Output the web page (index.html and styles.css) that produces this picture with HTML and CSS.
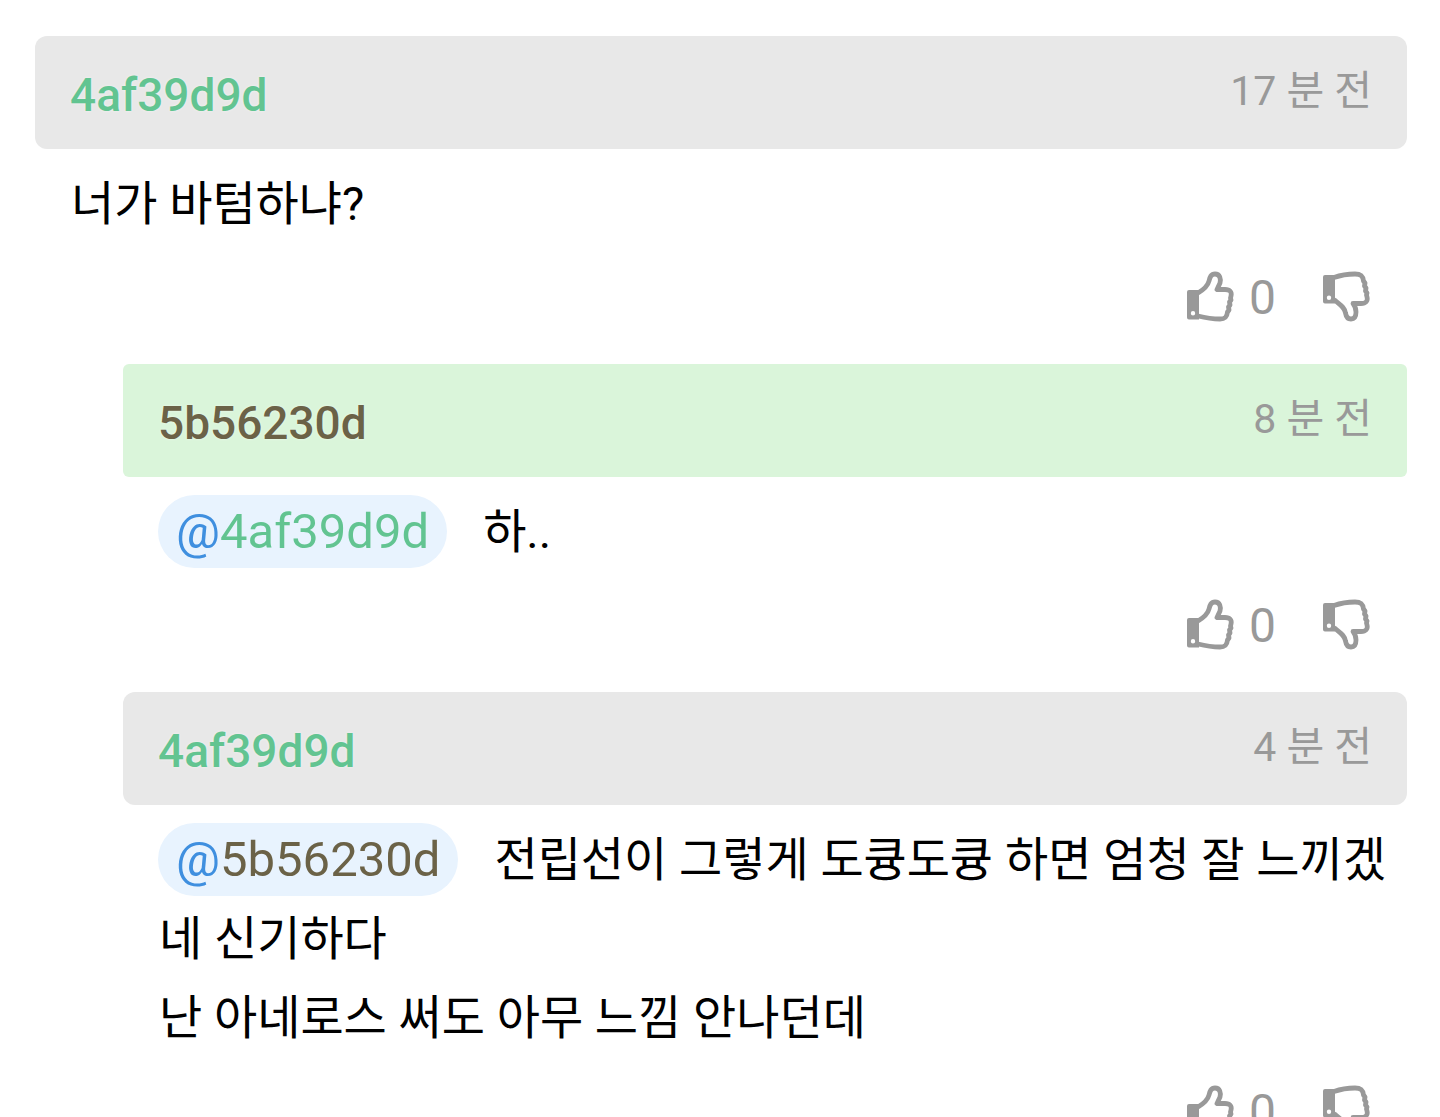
FILE: index.html
```html
<!DOCTYPE html>
<html lang="ko">
<head>
<meta charset="utf-8">
<meta name="viewport" content="width=device-width, initial-scale=1">
<title>댓글</title>
<link rel="stylesheet" href="styles.css">
</head>
<body>
<svg class="symbols" aria-hidden="true">
  <symbol id="thumb-up" viewBox="0 0 48 52">
    <path d="M11 22 C16 19 21 14 22 10 C23 6 24 3 28 3 C33 3 34 8 33 12 L30 18.500 H38 C43 18.500 45 21 44 25 L43.500 27 L44 29 L42.500 31 L43 34 L41.500 36 L42 39 L40.500 41 C40 46 38 48 33 48 C26 48 19 47 11 45" fill="none" stroke="currentColor" stroke-width="4.800" stroke-linejoin="round"/>
    <path fill="currentColor" fill-rule="evenodd" d="M2 19 H12 V48.500 H2 Q0 48.500 0 46.500 V21 Q0 19 2 19 Z M6 40 a2.200 2.200 0 1 0 0 4.400 a2.200 2.200 0 1 0 0-4.400 Z"/>
  </symbol>
  <symbol id="thumb-down" viewBox="0 0 48 52">
    <path d="M12 6.500 C19 4 27 3 33 3 C39 3 41 5 41.500 10 L43 12 L42.500 15 L44 17 L43.500 20 L45 22 L44.500 24 L45 26 C46 30 44 32.500 39 32.500 H31 C33 35 34 38 34 41 C34 45 33 48 29 48 C25 48 24 45 23.500 42 C23 36 17 33 12 28.500" fill="none" stroke="currentColor" stroke-width="4.800" stroke-linejoin="round"/>
    <path fill="currentColor" fill-rule="evenodd" d="M3 4 H13 V32.500 H3 Q1 32.500 1 30.500 V6 Q1 4 3 4 Z M7 24.500 a2.200 2.200 0 1 0 0 4.400 a2.200 2.200 0 1 0 0-4.400 Z"/>
  </symbol>
</svg>
<main class="comments">
  <article class="comment">
    <header class="comment-header">
      <strong class="author green">4af39d9d</strong><time class="time">17 분 전</time>
    </header>
    <p class="text">너가 바텀하냐?</p>
    <div class="votes">
      <button class="vote" type="button" aria-label="추천"><svg class="icon"><use href="#thumb-up"/></svg><span>0</span></button>
      <button class="vote" type="button" aria-label="비추천"><svg class="icon"><use href="#thumb-down"/></svg></button>
    </div>
  </article>
  <article class="comment reply">
    <header class="comment-header mine">
      <strong class="author brown">5b56230d</strong><time class="time">8 분 전</time>
    </header>
    <p class="text"><a class="mention" href="#">@<span class="green">4af39d9d</span></a>하..</p>
    <div class="votes">
      <button class="vote" type="button" aria-label="추천"><svg class="icon"><use href="#thumb-up"/></svg><span>0</span></button>
      <button class="vote" type="button" aria-label="비추천"><svg class="icon"><use href="#thumb-down"/></svg></button>
    </div>
  </article>
  <article class="comment reply">
    <header class="comment-header">
      <strong class="author green">4af39d9d</strong><time class="time">4 분 전</time>
    </header>
    <p class="text"><a class="mention" href="#">@<span class="brown">5b56230d</span></a>전립선이 그렇게 도큥도큥 하면 엄청 잘 느끼겠네 신기하다<br>난 아네로스 써도 아무 느낌 안나던데</p>
    <div class="votes">
      <button class="vote" type="button" aria-label="추천"><svg class="icon"><use href="#thumb-up"/></svg><span>0</span></button>
      <button class="vote" type="button" aria-label="비추천"><svg class="icon"><use href="#thumb-down"/></svg></button>
    </div>
  </article>
</main>
</body>
</html>
```
FILE: styles.css
```css
* { box-sizing: border-box; }
body {
  margin: 0;
  background: #fff;
  color: #000;
  font-family: Roboto, "Noto Sans CJK KR", sans-serif;
  overflow-x: hidden;
}
.symbols { display: none; }
.comments { padding: 36px 33px 0 35px; }
.reply { margin-left: 88px; }
.comment-header {
  display: flex;
  justify-content: space-between;
  padding: 26px 35px 21px;
  border-radius: 12px;
  background: #e8e8e8;
}
.mine { border-radius: 6px; background: #daf5da; }
.author { font-size: 46px; font-weight: 500; line-height: 66px; text-shadow: 0 0 3px #fff8; }
.time { font-size: 41px; line-height: 58px; color: #999; }
.green { color: #62c491; }
.brown { color: #6b6247; }
.text {
  margin: 0;
  padding: 15px 0 0 36px;
  font-size: 47px;
  line-height: 79px;
  word-break: break-all;
}
.mention {
  margin: 0 36px 0 -1px;
  padding: 8px 18px;
  border-radius: 37px;
  background: #e8f3fe;
  color: #3f8fdf;
  font-size: 49px;
  line-height: 60px;
  text-decoration: none;
}
.votes {
  display: flex;
  justify-content: flex-end;
  gap: 46px;
  padding: 27px 37px 40px 0;
}
.vote {
  display: flex;
  align-items: center;
  gap: 14px;
  padding: 0;
  border: 0;
  background: none;
  color: #999;
  font: 48px/54px Roboto, sans-serif;
}
.vote span { padding-top: 2px; line-height: 52px; }
.icon { display: block; width: 48px; height: 52px; }
```
